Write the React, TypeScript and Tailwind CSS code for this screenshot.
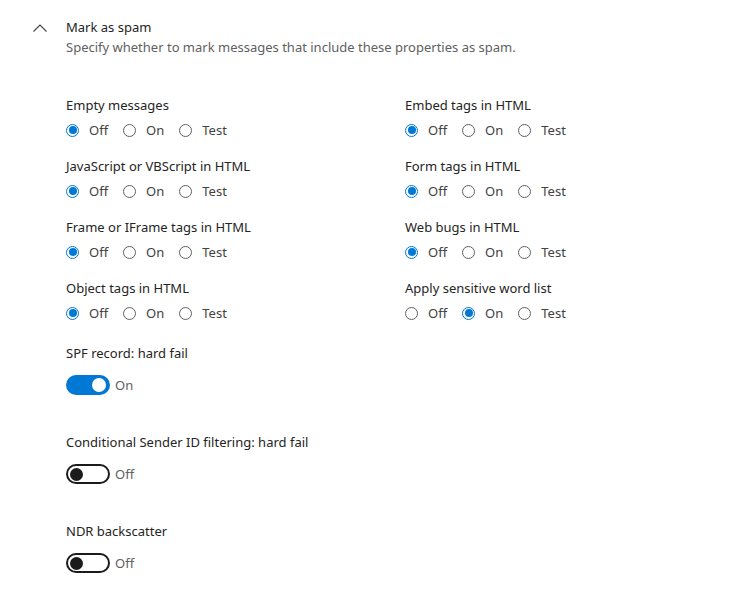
import React from "react";

const font = { fontFamily: '"Segoe UI", "Noto Sans", "Open Sans", sans-serif' };

function Radio({ checked, label }: { checked: boolean; label: string }) {
  return (
    <div className="flex items-center h-5">
      {checked ? (
        <span className="w-[13px] h-[13px] rounded-full border border-[#0078d4] flex items-center justify-center">
          <span className="w-[8px] h-[8px] rounded-full bg-[#0078d4]" />
        </span>
      ) : (
        <span className="w-[13px] h-[13px] rounded-full border border-[#616161]" />
      )}
      <span className="ml-[10px] text-[13px] text-[#424242] leading-5">{label}</span>
    </div>
  );
}

function RadioField({ label, value }: { label: string; value: "Off" | "On" | "Test" }) {
  return (
    <div className="flex flex-col">
      <div className="h-5 text-[13px] leading-5 text-[#242424]">{label}</div>
      <div className="mt-[5px] flex items-center gap-[15px]">
        <Radio checked={value === "Off"} label="Off" />
        <Radio checked={value === "On"} label="On" />
        <Radio checked={value === "Test"} label="Test" />
      </div>
    </div>
  );
}

function Toggle({ on }: { on: boolean }) {
  return (
    <div className="flex items-center h-5">
      {on ? (
        <span className="w-[44px] h-5 rounded-full bg-[#0078d4] flex items-center justify-end pr-[4px]">
          <span className="w-[14px] h-[14px] rounded-full bg-white" />
        </span>
      ) : (
        <span className="w-[44px] h-5 rounded-full border-2 border-[#1b1b1b] flex items-center pl-[2px]">
          <span className="w-[13px] h-[13px] rounded-full bg-[#1b1b1b]" />
        </span>
      )}
      <span className="ml-[5px] text-[13px] text-[#616161] leading-5">{on ? "On" : "Off"}</span>
    </div>
  );
}

function ToggleField({ label, on }: { label: string; on: boolean }) {
  return (
    <div className="flex flex-col">
      <div className="h-5 text-[13px] leading-5 text-[#242424]">{label}</div>
      <div className="mt-3">
        <Toggle on={on} />
      </div>
    </div>
  );
}

export default function App() {
  return (
    <div className="w-[733px] h-[611px] bg-white relative overflow-hidden" style={font}>
      <div className="flex pt-[17px]">
        <div className="w-[66px] flex justify-start pl-[33px] pt-[7px]">
          <svg width="14" height="8" viewBox="0 0 14 8" fill="none">
            <path d="M0.5 7.5 L7 1 L13.5 7.5" stroke="#424242" strokeWidth="1.1" />
          </svg>
        </div>
        <div className="flex flex-col">
          <div className="h-5 text-[13px] leading-5 text-[#242424]">Mark as spam</div>
          <div className="h-5 text-[13px] leading-5 text-[#616161]">
            Specify whether to mark messages that include these properties as spam.
          </div>
        </div>
      </div>
      <div className="pl-[66px] mt-[38px]">
        <div className="grid grid-cols-[339px_1fr] gap-y-4">
          <RadioField label="Empty messages" value="Off" />
          <RadioField label="Embed tags in HTML" value="Off" />
          <RadioField label="JavaScript or VBScript in HTML" value="Off" />
          <RadioField label="Form tags in HTML" value="Off" />
          <RadioField label="Frame or IFrame tags in HTML" value="Off" />
          <RadioField label="Web bugs in HTML" value="Off" />
          <RadioField label="Object tags in HTML" value="Off" />
          <RadioField label="Apply sensitive word list" value="On" />
        </div>
        <div className="mt-5 flex flex-col gap-[37px]">
          <ToggleField label="SPF record: hard fail" on={true} />
          <ToggleField label="Conditional Sender ID filtering: hard fail" on={false} />
          <ToggleField label="NDR backscatter" on={false} />
        </div>
      </div>
    </div>
  );
}
